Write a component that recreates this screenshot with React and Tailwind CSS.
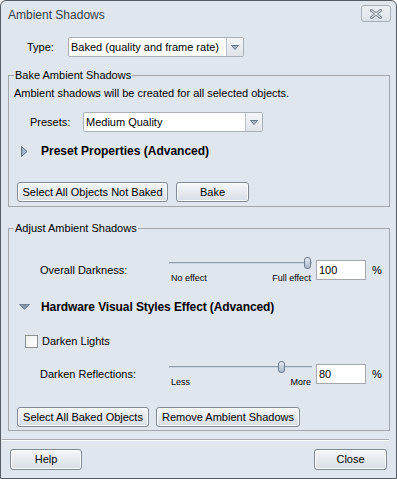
import React, { useState } from 'react';

function Button({ label, width, className = '' }) {
  return (
    <button
      className={`h-[20px] rounded-[3px] border border-[#7f8a96] bg-gradient-to-b from-[#f5f7f9] to-[#d8dee5] shadow-[inset_0_0_0_1px_#fbfcfd] text-[11px] leading-none text-black ${className}`}
      style={{ width }}
    >
      {label}
    </button>
  );
}

function Select({ value, width }) {
  return (
    <div
      className="flex h-[20px] items-stretch rounded-[2px] border border-[#a9b0b8] bg-white"
      style={{ width }}
    >
      <span className="flex-1 pl-[2px] leading-[18px] text-black">{value}</span>
      <span className="flex w-[17px] items-center justify-center border-l border-[#b9c0c8] bg-gradient-to-b from-[#f4f6f9] to-[#dfe4ea]">
        <svg width="8" height="5" viewBox="0 0 8 5">
          <polygon points="0.5,0.5 7.5,0.5 4,4.5" fill="#a9b5c3" stroke="#65768a" strokeWidth="1" />
        </svg>
      </span>
    </div>
  );
}

function Slider({ pos, left, right }) {
  return (
    <div className="w-[143px] h-[30px]">
      <div className="relative h-[14px]">
        <div className="absolute left-0 right-0 top-[6px] h-[2px] border-t border-[#8a9db2] bg-[#c9d4df]" />
        <div
          className="absolute top-[1px] h-[12px] w-[7px] rounded-[3px] border border-[#6d7d8f] bg-gradient-to-b from-[#e3e9f0] to-[#a9b8c9]"
          style={{ left: pos }}
        />
      </div>
      <div className="flex justify-between pl-[2px] pr-[1px] text-[9px] leading-[11px] mt-[3px]">
        <span>{left}</span>
        <span>{right}</span>
      </div>
    </div>
  );
}

function SliderRow({ label, pos, left, right, value, className = '' }) {
  return (
    <div className={`flex items-start ${className}`}>
      <span className="w-[155px] pl-[26px] mt-[8px] leading-[13px]">{label}</span>
      <Slider pos={pos} left={left} right={right} />
      <input
        readOnly
        value={value}
        className="ml-[4px] mt-[4px] h-[20px] w-[50px] border border-[#a4a8ad] bg-white pl-[2px] text-[11px] outline-none"
      />
      <span className="ml-[6px] mt-[8px] leading-[13px]">%</span>
    </div>
  );
}

function Group({ title, children, className = '' }) {
  return (
    <fieldset className={`ml-[7px] w-[382px] border border-[#a3a7ab] ${className}`}>
      <legend className="ml-[5px] px-[1px] leading-[13px]">{title}</legend>
      {children}
    </fieldset>
  );
}

export default function App() {
  const [darkenLights, setDarkenLights] = useState(false);

  return (
    <div className="flex h-[479px] w-[397px] flex-col rounded-t-[6px] border border-[#565c63] bg-[#dfe6ee] font-['Liberation_Sans',Arial,sans-serif] text-[11px] text-black">
      {/* title bar */}
      <div className="flex h-[29px] items-start">
        <span className="ml-[7px] mt-[7px] text-[12px] leading-[15px] text-[#36404b]">Ambient Shadows</span>
        <button className="ml-auto mr-[5px] mt-[4px] flex h-[17px] w-[30px] items-center justify-center rounded-[3px] border border-[#a6adb5] bg-gradient-to-b from-[#edf1f5] to-[#dde3ea]">
          <svg width="12" height="10" viewBox="0 0 12 10">
            <path d="M1.5 1.5 L10.5 8.5 M10.5 1.5 L1.5 8.5" stroke="#8a939d" strokeWidth="3" strokeLinecap="square" />
            <path d="M1.5 1.5 L10.5 8.5 M10.5 1.5 L1.5 8.5" stroke="#f4f6f8" strokeWidth="1" />
          </svg>
        </button>
      </div>

      {/* type */}
      <div className="mt-[7px] flex items-center">
        <span className="w-[67px] pl-[26px]">Type:</span>
        <Select value="Baked (quality and frame rate)" width={176} />
      </div>

      <Group title="Bake Ambient Shadows" className="mt-[12px]">
        <div className="pl-[5px] pb-[4px]">
          <p className="mt-[5px] leading-[13px]">Ambient shadows will be created for all selected objects.</p>
          <div className="mt-[12px] flex items-center">
            <span className="w-[69px] pl-[16px]">Presets:</span>
            <Select value="Medium Quality" width={180} />
          </div>
          <div className="mt-[11px] flex h-[16px] items-center">
            <svg width="7" height="11" viewBox="0 0 7 11" className="ml-[7px]">
              <polygon points="0.5,0.5 6,5.5 0.5,10.5" fill="#a7b6c6" stroke="#5f6f80" strokeWidth="1" />
            </svg>
            <span className="ml-[13px] text-[12px] font-bold">Preset Properties (Advanced)</span>
          </div>
          <div className="mt-[23px] ml-[3px] flex gap-[8px]">
            <Button label="Select All Objects Not Baked" width={151} />
            <Button label="Bake" width={73} />
          </div>
        </div>
      </Group>

      <Group title="Adjust Ambient Shadows" className="mt-[15px]">
        <div className="pl-[5px] pb-[3px]">
          <SliderRow
            className="mt-[21px]"
            label="Overall Darkness:"
            pos={135}
            left="No effect"
            right="Full effect"
            value="100"
          />
          <div className="mt-[13px] flex h-[16px] items-center">
            <svg width="11" height="6" viewBox="0 0 11 6" className="ml-[5px]">
              <polygon points="0.5,0.5 10.5,0.5 5.5,5.5" fill="#8395a9" stroke="#72849a" strokeWidth="1" />
            </svg>
            <span className="ml-[11px] text-[12px] font-bold tracking-[-0.1px]">Hardware Visual Styles Effect (Advanced)</span>
          </div>
          <label className="mt-[20px] flex h-[13px] items-center">
            <input
              type="checkbox"
              checked={darkenLights}
              onChange={(e) => setDarkenLights(e.target.checked)}
              className="ml-[11px] h-[13px] w-[13px] appearance-none border border-[#8e8f8f] bg-gradient-to-br from-[#f0f0f0] to-white"
            />
            <span className="ml-[4px] leading-[13px]">Darken Lights</span>
          </label>
          <SliderRow
            className="mt-[12px]"
            label="Darken Reflections:"
            pos={109}
            left="Less"
            right="More"
            value="80"
          />
          <div className="mt-[17px] ml-[3px] flex gap-[7px]">
            <Button label="Select All Baked Objects" width={132} />
            <Button label="Remove Ambient Shadows" width={144} />
          </div>
        </div>
      </Group>

      <div className="ml-[1px] mr-[7px] mt-[8px] h-[2px] border-t border-[#a9adb2] bg-white" />

      <div className="mt-[8px] flex">
        <Button label="Help" width={72} className="ml-[9px] h-[21px]" />
        <Button label="Close" width={73} className="ml-auto mr-[9px] h-[21px]" />
      </div>
    </div>
  );
}
